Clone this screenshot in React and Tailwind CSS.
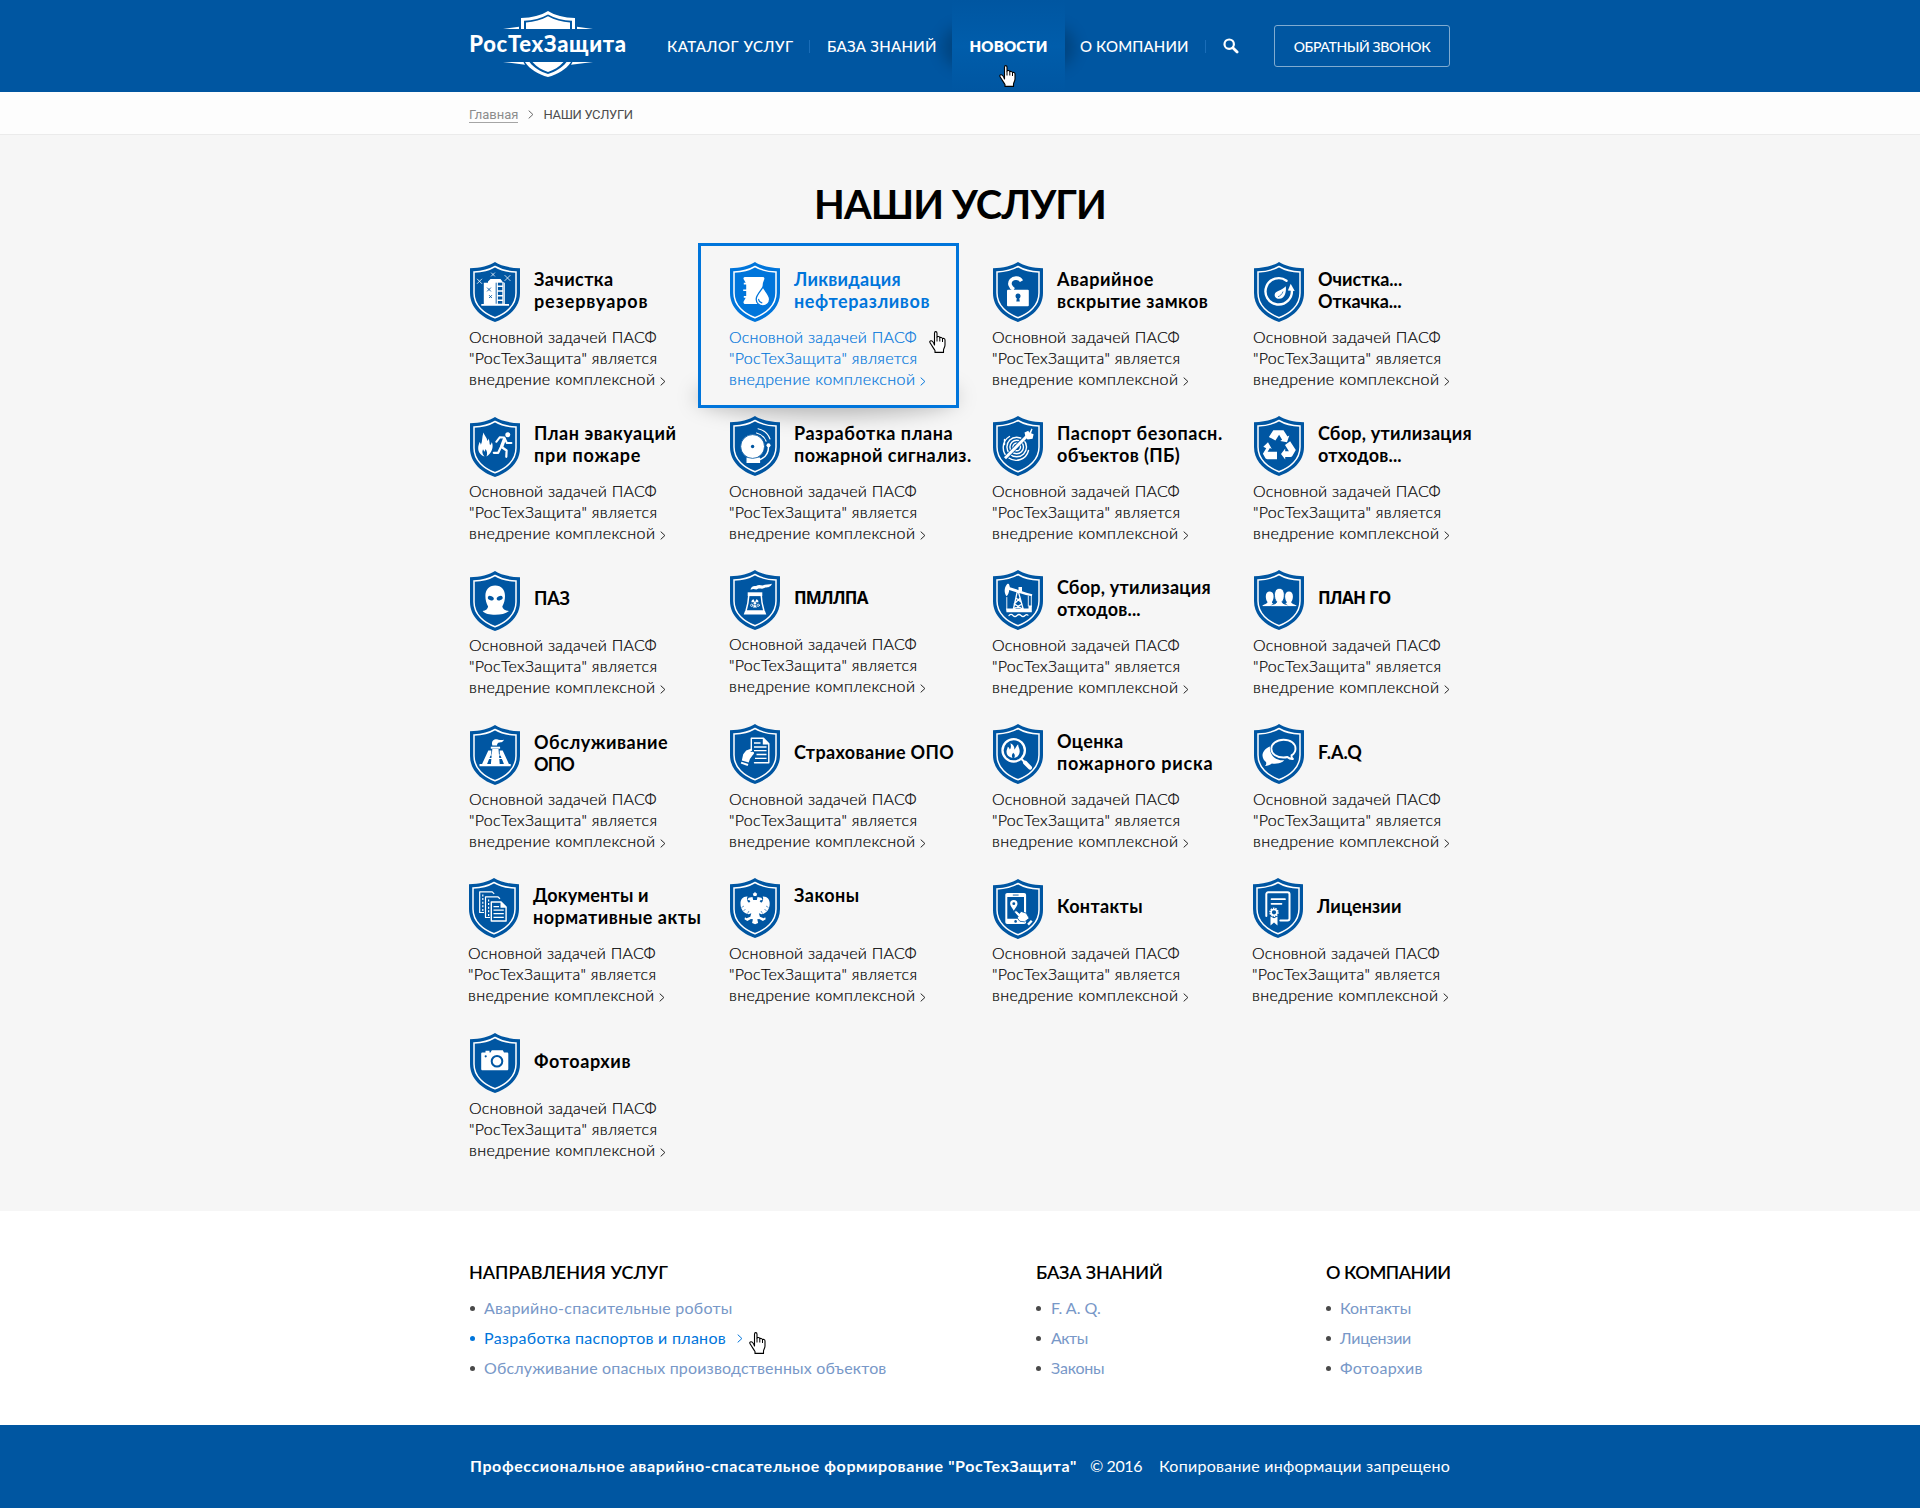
import React from "react";

/* Shield glyphs are drawn on a 50x60 canvas; white shapes on a currentColor shield. */
const white = { fill: "#fff" };
const line = { fill: "none", stroke: "#fff", strokeLinecap: "round", strokeLinejoin: "round" };
const cut = { fill: "currentColor" };

const spark = (x, y, r) => `M${x - r} ${y - r}L${x + r} ${y + r}M${x + r} ${y - r}L${x - r} ${y + r}`;

const glyphs = {
  tank: (
    <>
      <path {...white} d="M18 19.5 20.5 17h10l2 2.500v1.200h2.300V42H39v1.800H11.300V42h2.500V20.700H18z" />
      <path {...cut} d="M25.700 20.700h8v21h-8z" />
      <path {...line} strokeLinecap="butt" strokeWidth="1.600" d="M27 24.300h6M27 29h6M27 33.700h6M27 38.300h6" />
      <path {...white} d="M26.600 20h1.300v22h-1.300zM32.300 20h1.300v22h-1.300z" />
      <path {...line} strokeWidth=".8" d={spark(9.5, 19.3, 2.2) + spark(23, 12.5, 1.6) + spark(37.5, 16, 2.6)} />
      <path fill="none" stroke="currentColor" strokeWidth=".9" d={spark(19, 27.5, 1.9) + spark(20.5, 34.6, 1.4)} />
    </>
  ),
  barrel: (
    <>
      <path {...white} d="M15.500 15h17c2 0 2.400 1.600 1.400 3.200-1.500 3-1.600 6-.8 9.300-1.600 2.500 1.200 5.300 1.200 11.200L31 42H15.500c-2 0-2.400-1.500-1.700-2.700l1.900-3.500h-1.900v-1.700h2.400v-5h-3v-1.700h3v-5h-2.400v-1.700h1.900L13.800 17.600C13 16.200 13.500 15 15.500 15z" />
      <path {...white} stroke="currentColor" strokeWidth="1.300" d="M33 25c2.500 4.500 6.600 8 6.600 12.200a6.700 6.700 0 0 1-13.400 0C26.200 33 30.500 29.500 33 25z" />
      <path fill="none" stroke="currentColor" strokeWidth="1.100" strokeLinecap="round" d="M28.600 37.300c.2 2 1.500 3.300 3.300 3.600" />
    </>
  ),
  lock: (
    <>
      <rect {...white} x="14" y="27.800" width="21.800" height="16.400" rx="1" />
      <path {...line} strokeLinecap="butt" strokeWidth="3.600" d="M21 27.500c-4.200-2.200-5.200-6.500-2.800-9.300 2.600-3 8-2.800 10.300.9" />
      <circle {...cut} cx="25" cy="34" r="2.500" />
      <path {...cut} d="M24.200 34h1.700l.9 5.500h-3.500z" />
    </>
  ),
  pump: (
    <>
      <path {...line} strokeWidth="2.400" d="M32.500 18.700a13.200 13.200 0 1 0 5.300 9" />
      <path {...white} d="m36.700 21.800 4 7.200-6.800-.6z" />
      <path {...white} d="M31.800 24.200c.6 5-.2 12.300-6.800 12.600-2.800 0-4.600-2-4.300-4.300.5-3.800 6.600-3.500 11.100-8.300z" />
      <path fill="none" stroke="currentColor" strokeWidth=".7" d="M29 29.500c-1 3-3 4.500-5 5.200" />
    </>
  ),
  escape: (
    <>
      <path {...white} d="M14.500 39.500c-4-1.300-6.300-4.300-6.300-8.200 0-2.500.8-4 1.300-6.300.8 1 1.200 1.700 1.400 2.800 1.800-3.500.8-7.600 2.600-12.300.6 3 3.500 5 3.900 8.500.7-.7 1-1.500 1-2.500 1.700 2.700.7 5 1.700 6.700.8-.8 1.500-1.700 1.700-3.200 2.300 5-.3 11.500-5.300 14.500 1-3 .8-5-1-7.500-.2 1.300-.6 2-1.300 2.700-.2-1-.5-1.700-1.200-2.500-1.300 2.700-.5 5 1.500 7.300z" />
      <circle {...white} cx="37.800" cy="17.800" r="2.500" />
      <path {...line} strokeWidth="2" d="M26.300 24.800l3.600-4.600 4.400.2 2.600 5.600h4.500" />
      <path {...line} strokeWidth="3.400" d="m34.300 22.500-2.600 6.800" />
      <path {...line} strokeWidth="2.200" d="m31.600 30 5 3.500-.3 6.300M30.700 30.500l-2.500 5.300h-4.400" />
    </>
  ),
  bell: (
    <>
      <path {...white} d="M16.500 47v-5.500h13.600V47z" />
      <circle {...white} stroke="currentColor" strokeWidth=".8" cx="22.600" cy="30.500" r="11.900" />
      <circle {...cut} cx="22.600" cy="30.500" r="1.700" />
      <path {...line} strokeWidth="1.100" d="M26.500 17c4.800 1.200 8 4 9.600 8.200M28 12.800c6 1.300 10.300 5 12 10.200" />
      <circle {...white} cx="38.500" cy="29.300" r="2" />
      <path {...line} strokeWidth="1.500" d="M38.500 29.500c.4 7.500-3.500 12.500-9.500 14.500" />
    </>
  ),
  hose: (
    <>
      <g {...line} strokeWidth="1.400">
        <circle cx="23.700" cy="31" r="3.800" /><circle cx="23.700" cy="31" r="6.800" />
        <circle cx="23.700" cy="31" r="9.800" /><path d="M16.500 20.500a12.800 12.800 0 1 0 19 14M11.500 23.500v5" />
      </g>
      <path stroke="currentColor" strokeWidth="4.400" d="M12.500 42 33.500 20" />
      <path stroke="#fff" strokeWidth="2.900" d="M12 42.300 34.500 19.500" />
      <path {...white} d="m31.500 16.500 3.800-1.700 1 1.900 2.200-4.200 1 .8-1.400 3.900 2.500 1-1 4.500-5 .8-2-2.200z" />
    </>
  ),
  recycle: (
    <g {...white}>
      <path d="M19.300 14.200h10.200l4 6.300 1.800-.9-2.300 6.600-6.800-1.300 1.900-1.200-3-5-3.700 5.800-6.500-3.500z" />
      <path d="m35.800 24 5.700 8.600-3.500 6.200c-.4.600-1 .8-1.700.8h-5.400v2.600l-4.200-5.400 4.200-5.500v2.700h3.700l-3.900-6.300z" transform="translate(.3 1.300)" />
      <path d="M14.500 25.800l3.800 6.700-1.900-1-2.300 3.800h9.400v7.500H13.800c-1 0-1.600-.4-2-1.100l-2.400-4.300 3.300-5.600-2.900-1.400z" transform="translate(-.5 .4)" />
    </g>
  ),
  mask: (
    <>
      <path {...white} d="M25.200 14.500c6.400 0 9.800 4.200 9.800 10.500 0 3.500-.9 7.500-2.700 10.500.2 2.400 2.400 3.800 6.700 4.600-3.500 3-8.200 3.700-13.800 3.700s-10.300-.7-12.600-3.700c3.300-.8 5.300-2.200 5.500-4.600-1.800-3-2.700-7-2.700-10.500 0-6.300 3.400-10.500 9.800-10.500z" />
      <ellipse {...cut} cx="20.800" cy="27.200" rx="3.100" ry="2.100" transform="rotate(24 20.800 27.200)" />
      <ellipse {...cut} cx="29.700" cy="27.200" rx="3.100" ry="2.100" transform="rotate(-24 29.700 27.200)" />
    </>
  ),
  reactor: (
    <>
      <path {...white} d="M20.500 19.800c.3-3 2.700-4.300 5.500-3.800 2.400-1.700 4.600-1 6.500-.5 3-1.500 6.500-.8 9.500-1.700-1.200 3.200-4 3.700-6.800 3.800-2.200 1.800-4.700.6-6.700 1-1.800 1.600-3.700.2-5.400.4z" />
      <path {...white} d="M17.700 22.300h14.600v3.800H17.700z" />
      <path {...line} strokeWidth="1.500" d="M18.700 26c-.2 5-1.300 10-2.700 15h18c-1.400-5-2.500-10-2.700-15" />
      <path {...white} d="M15 41h20l1.300 3.600H13.700zM21.600 30.700a4 4 0 0 1 2-1.500l1.300 3h-3.500zM28.300 30.700a4 4 0 0 0-2-1.500l-1.300 3h3.400zM22.800 37.500l2.100-3.300 2.100 3.300z" />
      <circle {...white} cx="24.900" cy="33.300" r="1.300" />
      <circle {...line} strokeWidth=".8" cx="21.800" cy="35.300" r="1.200" />
      <circle {...line} strokeWidth=".8" cx="28.200" cy="35.300" r="1.200" />
    </>
  ),
  pumpjack: (
    <>
      <path {...white} d="M14 14.300c1-.8 2-.6 2.300.6l.6 2.300 17.400 5.700 5 1.300-.4 2-6-1.100-16.700-5.200c-.2 2.600-.8 4.200-2.500 6.300-2.700-2.600-2.800-8.500.3-11.900z" />
      <path {...line} strokeWidth="1.300" d="m24.300 21.500-4 18M25.300 21.500l5 18M23 28l5 4M27.200 28l-6 6M21.500 34l8 5M29 34l-8.500 5" />
      <path {...white} d="M13 38.500h22.500v-3h3.300v6.800H13.500zM25.500 17h3.500v4.500h-3.500z" />
      <path {...line} strokeWidth=".9" d="M35.300 26v10M38.300 25.500v11M13.800 27.500v11" />
      <path {...line} strokeWidth="1.200" d="M16 45.500c1.500-1.400 2.700-1.400 4 0 1.300 1.300 2.700 1.300 4 0 1.300-1.300 2.700-1.300 4 0 1.300 1.300 2.700 1.300 4 0 1-.9 2-1 3-.3" />
    </>
  ),
  people: (
    <>
      <path {...white} d="M8.700 36.300c0-2.300 4.800-2 4.800-4.300-1.300-1.500-1.700-3.500-1.700-5.700 0-3 1.500-4.800 3.900-4.800s3.900 1.800 3.900 4.800c0 2.200-.4 4.200-1.700 5.700 0 2.300 4 2 4 4.300zM28.500 36.300c0-2.300 4.300-2 4.300-4.300-1.300-1.500-1.700-3.500-1.700-5.700 0-3 1.500-4.800 3.900-4.800s3.900 1.800 3.900 4.800c0 2.200-.4 4.200-1.700 5.700 0 2.300 4.700 2 4.700 4.300z" />
      <path {...white} stroke="currentColor" strokeWidth=".9" d="M16.500 37c0-3.300 6.400-2.600 6.200-5.300-1.700-1.600-2.200-4-2.200-7 0-3.800 1.700-6.300 4.900-6.300s4.900 2.500 4.900 6.300c0 3-.5 5.400-2.200 7-.2 2.700 6.200 2 6.200 5.300z" />
      <path {...white} d="M8.700 35.300h33.600v1H8.700z" />
      <path {...cut} d="M8 36.300h35v1.200H8z" />
    </>
  ),
  torch: (
    <>
      <path {...white} d="M22.300 20.500c-.8-2.700-.3-5 2.200-6 2.600-.8 5.300 1.300 9.500.3-2 4-4.800 1.800-6.200 3.500-.6.700-.8 1.300-.8 2.200z" />
      <path {...white} d="M20.800 21.700h9.300v2h-9.300z" />
      <path {...white} d="M22.300 24h6.200l1.200 15h-8.800zM18.300 25.500h3v3l-4.300 10.700h-5zM29.700 25.500h3L39 39.200h-5l-4.300-10.700zM9.500 39h31.200v2.200H9.500z" />
      <path {...white} d="M17 29.500h17v1H17zM16 33h19v1H16z" />
    </>
  ),
  handDoc: (
    <>
      <path {...line} strokeWidth="1.400" d="M21.300 26V14.200h12.200l5.300 5.500v19H24.500" />
      <path {...white} d="M32.800 13.800v6.600h6.200z" />
      <path {...line} strokeWidth="1.300" strokeLinecap="butt" d="M24 19h6.500M24 23h12.500M24 26.700h12.500M26.500 30.500h10M25 34.300h11.500" />
      <path {...white} d="m11.800 36.500 1.400-6.300 3-3.700 4-1.500c2.200-.7 2.500 1 1.300 1.800l-1.300 1.300 2.600-.3c1.800.2 1.800 2-.2 3.500l-2.700 3.700-1.200 3.500z" />
      <path {...white} d="m11.400 37.800 7 2.300-.8 2-6.800-2.500z" />
    </>
  ),
  riskLens: (
    <>
      <circle {...line} strokeWidth="2.300" cx="20.700" cy="26.300" r="11.200" />
      <path {...white} d="M19.500 34c-4-.8-6-3-6-6.200 0-2 1-3 1.300-5 1.200.8 1.700 1.600 2 2.800 1.400-1.600 1.300-3.800.6-6.300 3 1.300 4.200 3.500 4 6.500 1.200-1.500 1.800-3.800 3.800-5.500-.3 2.500 1.500 4 1.500 7 0 3.800-2.200 6-5.500 6.700 1.200-2.500.5-4-1-5.300-1.500 1.800-1.700 3.300-.7 5.300z" />
      <path {...line} strokeWidth="2" d="m29 35.500 2 2" />
      <path {...line} strokeWidth="4" d="m32 38.500 5 5.200" />
    </>
  ),
  chat: (
    <>
      <path {...white} d="M16 22.500c-5 2-7.500 5.500-7.500 9 0 2.500 1.500 5 3.500 6.500.5 1.500.3 2.700-1 4 2.800 0 5-1 6.800-2.500 6.200.7 10.200-.8 12.500-3.300C22 37 15 31 16 22.500z" />
      <path {...line} strokeWidth="1.900" d="M29.500 15.700c7.200 0 12 4 12 9 0 2.700-1.500 5-4 6.700-.3 1.500.2 2.700 1.500 3.600-2.600.2-4.300-.7-5.600-2-1.200.3-2.500.5-3.900.5-7.200 0-12.200-4-12.200-8.800s5-9 12.200-9z" />
    </>
  ),
  documents: (
    <>
      <path {...line} strokeWidth="1.200" strokeLinecap="butt" d="M15 34.500h-4.300V13.800h12.500l2 2M21 39.500h-4.500V18.800h12.300l2.200 2" />
      <path stroke="#fff" strokeWidth="1.200" strokeDasharray="2 1.600" d="M13.800 16.500v17M19.600 21.500v17" />
      <path {...line} strokeWidth="1.400" d="M22.300 24h9.800l5 5v14H22.300z" />
      <path {...white} d="M31.500 23.500v6.200h6z" />
      <path {...line} strokeWidth="1.200" strokeLinecap="butt" d="M24.500 28.700h5.500M24.500 32.200h10.300M24.500 35.700h10.300M24.500 39.300h10.300" />
    </>
  ),
  eagle: (
    <>
      <path {...white} d="M25 13.800l1 1.500 1.200.2-.8 2.500h-2.800l-.8-2.500 1.200-.2zM22.500 19l1 4.500c-2 .8-3.500 0-4.200-1.500l-2 .2 1.300-2.500zM27.500 19l-1 4.500c2 .8 3.500 0 4.200-1.500l2 .2-1.300-2.500z" />
      <path {...white} d="M17.500 18.500c-4.500-.3-7 2.800-7 7 0 5.500 3 10 8.200 10.800l2.600-1-1 3.500-3.800 1.500-1.500-1-.5 2 2.800 1.600 3.600-2 2 .3-.8 3.800 3 1.300 3-1.300-.8-3.800 2-.3 3.600 2 2.800-1.600-.5-2-1.500 1-3.800-1.500-1-3.500 2.600 1c5.200-.8 8.200-5.300 8.200-10.800 0-4.200-2.500-7.300-7-7 1 3 .3 5-1.500 6.200L28.500 22h-7L19 24.700c-1.800-1.200-2.500-3.200-1.500-6.200z" />
      <path stroke="currentColor" strokeWidth=".6" fill="none" d="m11.500 29.500 2.500-1.500M13.500 33l2-2M17.500 35.500l1.500-2.500M38.500 29.500 36 28M36.500 33l-2-2M32.500 35.500 31 33" />
    </>
  ),
  phone: (
    <>
      <path {...white} fillRule="evenodd" d="M14.300 14h16.800c1.200 0 2 .8 2 2v27c0 1.200-.8 2-2 2H14.300c-1.200 0-2-.8-2-2V16c0-1.200.8-2 2-2zm0 4v21.800H31V18z" />
      <path {...cut} d="M19.800 15.600h5.800v.9h-5.800z" />
      <circle {...cut} cx="22.600" cy="42.400" r="1.300" />
      <path {...white} fillRule="evenodd" d="M20.800 21a3.700 3.700 0 0 1 3.700 3.700c0 2-2.200 4-3.700 7-1.500-3-3.700-5-3.700-7a3.700 3.700 0 0 1 3.700-3.700zm0 2.200a1.400 1.400 0 1 0 0 2.900 1.400 1.400 0 0 0 0-2.900z" />
      <path {...white} stroke="currentColor" strokeWidth=".8" d="M21.800 32.300c.8-.8 1.700-.6 2.400.1l2.300 2 1.500-2 5.200 1.700 3 5.200-4.600 3.500-4.700-.5-2.700-3.400 1-1.400-3.200-3.500c-.5-.6-.6-1.200-.2-1.700z" />
      <path {...white} d="m34.200 44.700 3.700-3.700 1.700 1.600-3.700 3.800z" />
    </>
  ),
  license: (
    <>
      <path {...line} strokeWidth="2" d="M13.300 38V16.300c0-1.200.7-2 2-2h19.200c1.300 0 2 .8 2 2v24.200c0 1.300-.7 2-2 2h-7.200" />
      <path {...line} strokeWidth="1.700" d="M18.500 21.200h13.500M18.500 25.800h10" />
      <circle {...line} strokeLinecap="butt" strokeWidth="1.600" strokeDasharray="1.500 .9" cx="21" cy="34.300" r="3.900" />
      <circle {...line} strokeWidth="1.500" cx="21" cy="34.300" r="2.900" />
      <path {...white} d="m17.500 38.500 3.500 1.700 3.500-1.700v9L21 44.500l-3.500 3z" />
    </>
  ),
  camera: (
    <>
      <path {...white} d="M12.500 19.500h3v-1.700h4v1.700h1l1.300-2.200h11l1.200 2.200h3c.8 0 1.300.5 1.300 1.300V36c0 .8-.5 1.300-1.300 1.300H12.500c-.8 0-1.300-.5-1.300-1.300V20.800c0-.8.500-1.300 1.300-1.300z" />
      <circle fill="none" stroke="currentColor" strokeWidth="2" cx="27" cy="28.300" r="5.300" />
      <circle {...cut} cx="15.700" cy="23.300" r="1.100" />
    </>
  ),
};

function Shield({ glyph }) {
  return (
    <svg viewBox="0 0 50 60" className="h-[60px] w-[50px] shrink-0">
      <path fill="currentColor" d="M25 0C19.500 3.700 10 6 0 6.300V31c0 15 12 24.500 25 29 13-4.500 25-14 25-29V6.300C40 6 30.500 3.700 25 0z" />
      <path fill="none" stroke="#fff" strokeWidth="1.500" d="M25 4.500C19.500 7.800 12 9.700 4 10v21c0 12.500 10 20.600 21 24.700C36 51.600 46 43.500 46 31V10c-8-.3-15.500-2.200-21-5.500z" />
      {glyphs[glyph]}
    </svg>
  );
}

function Hand() {
  return (
    <svg viewBox="0 0 17 22" className="h-[22px] w-[17px]">
      <path
        fill="#fff" stroke="#000" strokeWidth="1.100" strokeLinejoin="round"
        d="M5.500 14V2.300C5.500 1 6 .6 6.700.6S8 1 8 2.300V6c.2-.7 2.700-.7 2.800.8.300-.7 2.600-.6 2.700 1 .5-.7 2.500-.4 2.500 1.200v5c0 2-1.300 3.500-1.500 5v2.400H6V19.500C4.500 17 3 15 1.200 12c-1-1.600 0-2.300.8-2.300C3.200 9.700 4.500 11 5.500 14z"
      />
      <path fill="none" stroke="#000" d="M8 6v4.500M10.800 7v3.500M13.500 8v3" />
    </svg>
  );
}

function Chevron({ className }) {
  return (
    <svg viewBox="0 0 6 9" className={"inline-block h-[9px] w-[6px] " + className}>
      <path fill="none" stroke="currentColor" d="M.7.6 4.900 4.500.7 8.400" />
    </svg>
  );
}

const rows = [
  [
    { glyph: "tank", title: [["Зачистка", "tracking-[0.4px]"], ["резервуаров", "tracking-[0.9px]"]] },
    { glyph: "barrel", active: true, title: [["Ликвидация", "tracking-[0.26px]"], ["нефтеразливов", "tracking-[0.58px]"]] },
    { glyph: "lock", title: [["Аварийное", "tracking-[0.55px]"], ["вскрытие замков", "tracking-[0.51px]"]] },
    { glyph: "pump", title: [["Очистка...", "tracking-[0px]"], ["Откачка...", "tracking-[-0.05px]"]] },
  ],
  [
    { glyph: "escape", head: "mt-px", title: [["План эвакуаций", "tracking-[0.53px]"], ["при пожаре", "tracking-[0.8px]"]] },
    { glyph: "bell", title: [["Разработка плана", "tracking-[0.56px]"], ["пожарной сигнализ.", "tracking-[0.45px]"]] },
    { glyph: "hose", title: [["Паспорт безопасн.", "tracking-[0.54px]"], ["объектов (ПБ)", "tracking-[0.38px]"]] },
    { glyph: "recycle", title: [["Сбор, утилизация", "tracking-[0.25px]"], ["отходов...", "tracking-[0.2px]"]] },
  ],
  [
    { glyph: "mask", head: "mt-px", offset: "pt-[17px]", title: [["ПАЗ", "tracking-[-0.15px]"]] },
    { glyph: "reactor", lift: "-mt-[2px]", offset: "pt-[17px]", title: [["ПМЛЛПА", "tracking-[-0.8px] font-['Open_Sans'] text-[17px]"]] },
    { glyph: "pumpjack", title: [["Сбор, утилизация", "tracking-[0.25px]"], ["отходов...", "tracking-[0.2px]"]] },
    { glyph: "people", offset: "pt-[17px]", title: [["ПЛАН ГО", "tracking-[-0.7px] font-['Open_Sans'] text-[17px]"]] },
  ],
  [
    { glyph: "torch", head: "mt-px", offset: "pt-[7px]", title: [["Обслуживание", "tracking-[0.52px]"], ["ОПО", "tracking-[-0.9px]"]] },
    { glyph: "handDoc", offset: "pt-[17px]", title: [["Страхование ОПО", "tracking-[0.36px]"]] },
    { glyph: "riskLens", title: [["Оценка", "tracking-[0.4px]"], ["пожарного риска", "tracking-[0.74px]"]] },
    { glyph: "chat", offset: "pt-[17px]", title: [["F.A.Q", "tracking-[0px]"]] },
  ],
  [
    { glyph: "documents", shift: "-ml-px", title: [["Документы и", "tracking-[0.15px]"], ["нормативные акты", "tracking-[0.48px]"]] },
    { glyph: "eagle", title: [["Законы", "tracking-[0.45px]"]] },
    { glyph: "phone", head: "mt-px", offset: "pt-[17px]", title: [["Контакты", "tracking-[0.35px]"]] },
    { glyph: "license", shift: "-ml-px", offset: "pt-[17px]", title: [["Лицензии", "tracking-[0.1px]"]] },
  ],
  [{ glyph: "camera", head: "mt-px", offset: "pt-[18px]", lift: "", title: [["Фотоархив", "tracking-[0.6px]"]] }],
];

function Service({ glyph, title, active, head = "", offset = "pt-[6px]", shift = "", lift = "-mt-px" }) {
  return (
    <article className={"relative h-[154px] whitespace-nowrap " + shift + (active ? " text-[#0075db]" : " text-[#0056a2]")}>
      {active && (
        <>
          <div className="absolute top-[116px] -left-[34px] h-[38px] w-[264px] rounded-[50%] bg-black/25 blur-[10px]" />
          <div className="absolute -top-[19px] -left-[31px] h-[165px] w-[261px] border-[3px] border-[#0075db] bg-[#f6f6f6]" />
        </>
      )}
      <div className="relative flex h-[62px] gap-[14px] pl-px">
        <div className={head}><Shield glyph={glyph} /></div>
        <h2 className={"text-[18px] leading-[22px] font-bold " + offset + (active ? "" : " text-black")}>
          {title.map(([text, style]) => <span key={text} className={"block " + style}>{text}</span>)}
        </h2>
      </div>
      <p className={"relative pt-[3px] text-[16px] leading-[21px] font-light [-webkit-text-stroke:0.2px] " + lift + (active ? "" : " text-black")}>
        <span className="block tracking-[0.22px]">Основной задачей ПАСФ</span>
        <span className="block tracking-[0.31px]">"РосТехЗащита" является</span>
        <span className="block tracking-[0.4px]">
          внедрение комплексной <Chevron className={active ? "" : "text-[#222]"} />
        </span>
      </p>
      {active && <div className="absolute top-[69px] left-[200px]"><Hand /></div>}
    </article>
  );
}

function Logo() {
  return (
    <a className="flex w-[158px] flex-col items-center pt-[11px] text-white">
      <svg viewBox="0 0 90 18" className="h-[18px] w-[90px] fill-white">
        <path d="M45 0c7 4.500 16 6.700 27 7v11h-3V9.800C60 9.500 51.500 7.300 45 3.400 38.500 7.300 30 9.500 21 9.800V18h-3V7C29 6.700 38 4.500 45 0z" />
        <path d="M45 5.200c6.500 3.600 14 5.800 22 6.200V18H23v-6.600c8-.4 15.500-2.600 22-6.200zM0 18l16-2.200V18zM90 18l-16-2.200V18z" />
      </svg>
      <span className="h-[33px] text-[22px] leading-[29px] font-black tracking-[0.65px] whitespace-nowrap">РосТехЗащита</span>
      <svg viewBox="0 0 90 15" className="h-[15px] w-[90px] fill-white">
        <path d="M22 0h4.500C31 6 37.500 9.500 45 12 52.500 9.500 59 6 63.500 0H68C63 7.500 55 12.300 45 15 35 12.300 27 7.500 22 0z" />
        <path d="M29.500 0h31C56 5 51 8 45 10 39 8 34 5 29.500 0zM0 0h20.500l1.500 2.700zM90 0H69.500L68 2.700z" />
      </svg>
    </a>
  );
}

function Header() {
  return (
    <header className="h-[92px] bg-[#0056a1] text-white">
      <div className="mx-auto flex h-full w-[982px]">
        <Logo />
        <nav className="ml-[40px] flex h-full shrink-0 items-center text-[15px] leading-5 font-medium whitespace-nowrap">
          <a className="w-[142px] tracking-[0.5px]">КАТАЛОГ УСЛУГ</a>
          <i className="mr-[16px] h-[13px] w-px bg-[#1a6db8]" />
          <a className="w-[126px] pl-px tracking-[0.28px]">БАЗА ЗНАНИЙ</a>
          <div className="relative h-full w-[113px]">
            <div className="absolute inset-y-0 -left-[30px] w-[30px] overflow-hidden">
              <div className="absolute top-[26px] left-[20px] h-[42px] w-[40px] rounded-[50%] bg-black/20 blur-[7px]" />
            </div>
            <div className="absolute inset-y-0 -right-[30px] w-[30px] overflow-hidden">
              <div className="absolute top-[26px] right-[20px] h-[42px] w-[40px] rounded-[50%] bg-black/20 blur-[7px]" />
            </div>
            <a className="relative flex h-full items-center justify-center bg-linear-to-b from-[#0056a1] via-[#005dab] to-[#0056a1] font-extrabold tracking-[0.2px]">НОВОСТИ</a>
            <div className="absolute top-[65px] left-[47px]"><Hand /></div>
          </div>
          <a className="w-[140px] pl-[15px] tracking-[0.15px]">О КОМПАНИИ</a>
          <i className="mr-[17px] h-[13px] w-px bg-[#1a6db8]" />
          <svg viewBox="0 0 16 16" className="h-[16px] w-[16px]">
            <circle cx="6.200" cy="6.200" r="4.700" fill="none" stroke="#fff" strokeWidth="2.200" />
            <path d="m9.800 9.800 4.300 4.300" stroke="#fff" strokeWidth="2.800" strokeLinecap="round" />
          </svg>
        </nav>
        <a className="mt-[25px] mr-px ml-auto flex h-[42px] w-[176px] shrink-0 items-center justify-center rounded-[3px] border border-[#80abd0] text-[14px] font-medium tracking-[-0.37px] whitespace-nowrap">
          ОБРАТНЫЙ ЗВОНОК
        </a>
      </div>
    </header>
  );
}

function Links({ className, heading, headingStyle, items }) {
  return (
    <section className={"whitespace-nowrap " + className}>
      <h3 className={"text-[18px] leading-6 font-semibold text-black " + headingStyle}>{heading}</h3>
      <ul className="mt-[9px] text-[16px] leading-[30px]">
        {items.map(([text, style, active]) => (
          <li key={text} className={"flex h-[30px] items-center " + (active ? "text-[#0075db]" : "text-[#7898c8]")}>
            <span className={"mr-[9px] size-[5px] rounded-full " + (active ? "bg-[#0075db]" : "bg-[#4a4a4a]")} />
            <span className={style}>{text}</span>
            {active && <Chevron className="ml-[11px]" />}
            {active && <span className="ml-[6px] pt-[10px]"><Hand /></span>}
          </li>
        ))}
      </ul>
    </section>
  );
}

export default function App() {
  return (
    <div className="flex h-[1508px] flex-col bg-white font-['Lato','Open_Sans',sans-serif]">
      <Header />
      <div className="h-[43px] border-b border-[#ebebeb] bg-[#fdfdfd]">
        <div className="mx-auto flex h-full w-[982px] items-center font-['Roboto'] text-[13px] leading-[15px]">
          <a className="mt-[3px] border-b border-[#a5a5a5] text-[#8c8c8c]">Главная</a>
          <Chevron className="mt-[3px] ml-[10px] h-[8px] text-[#666]" />
          <span className="mt-[2px] ml-[9px] tracking-[-0.33px] text-[#4d4d4d]">НАШИ УСЛУГИ</span>
        </div>
      </div>
      <main className="h-[1076px] bg-[#f6f6f6] pt-[45px]">
        <h1 className="text-center text-[40px] leading-[48px] font-bold tracking-[-0.9px] text-black">НАШИ УСЛУГИ</h1>
        <div className="mx-auto mt-[34px] w-[982px]">
          {rows.map((items, i) => (
            <div key={i} className="grid grid-cols-[260px_263px_261px_198px]">
              {items.map((item) => <Service key={item.glyph} {...item} />)}
            </div>
          ))}
        </div>
      </main>
      <div className="h-[214px]">
        <div className="mx-auto flex w-[982px] pt-[49px]">
          <Links
            className="w-[567px] pl-px" heading="НАПРАВЛЕНИЯ УСЛУГ" headingStyle="-ml-px tracking-[0px]"
            items={[
              ["Аварийно-спасительные роботы", "tracking-[0.25px]"],
              ["Разработка паспортов и планов", "tracking-[0.28px]", true],
              ["Обслуживание опасных производственных объектов", "tracking-[0.17px]"],
            ]}
          />
          <Links
            className="w-[290px]" heading="БАЗА ЗНАНИЙ" headingStyle="tracking-[-0.17px]"
            items={[["F. A. Q.", "ml-px"], ["Акты", "ml-px tracking-[-0.5px]"], ["Законы", "ml-px tracking-[-0.2px]"]]}
          />
          <Links
            className="" heading="О КОМПАНИИ" headingStyle="tracking-[-0.45px]"
            items={[["Контакты", "tracking-[-0.1px]"], ["Лицензии", "tracking-[-0.28px]"], ["Фотоархив", "tracking-[0.35px]"]]}
          />
        </div>
      </div>
      <footer className="h-[83px] bg-[#0056a1] text-white">
        <div className="mx-auto flex h-[81px] w-[982px] items-center pl-px text-[16px] whitespace-nowrap">
          <b className="w-[620px] tracking-[0.6px]">Профессиональное аварийно-спасательное формирование "РосТехЗащита"</b>
          <span className="w-[69px] tracking-[-0.4px]">© 2016</span>
          <span className="tracking-[0.26px]">Копирование информации запрещено</span>
        </div>
      </footer>
    </div>
  );
}
